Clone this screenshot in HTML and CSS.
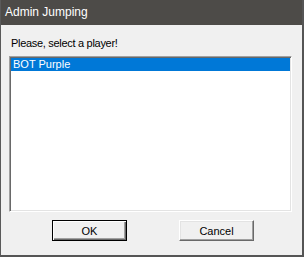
FILE: index.html
```
<!DOCTYPE html>
<html lang="en">
<head>
  <meta charset="UTF-8" />
  <title>Admin Jumping</title>
  <link rel="stylesheet" href="styles.css">
</head>
<body>

<div class="window">
  <div class="titlebar">Admin Jumping</div>
  <div class="client">
    <div class="prompt">Please, select a player!</div>
    <div class="listbox">
      <div class="item selected">BOT Purple</div>
    </div>
    <div class="buttons">
      <button class="btn default">OK</button>
      <button class="btn">Cancel</button>
    </div>
  </div>
</div>

</body>
</html>
```

FILE: styles.css
```
body { margin: 0; padding: 0; background: #4d4b48; }
.window { width: 304px; height: 257px; box-sizing: border-box; display: flex; flex-direction: column;
          background: #4d4b48; border-left: 1px solid #5a5a5a; border-right: 2px solid #555; border-bottom: 2px solid #555; }
.titlebar { height: 25px; flex: none; color: #fff; font: 12px "Liberation Sans", Arial, sans-serif;
            line-height: 25px; padding-left: 4px; }
.client { flex: 1; background: #f0f0f0; padding: 12px 10px 0 8px; display: flex; flex-direction: column;
          font: 11px "Liberation Sans", Arial, sans-serif; color: #000; }
.prompt { line-height: 13px; margin-left: 2px; letter-spacing: -0.3px; }
.listbox { margin-top: 6px; height: 156px; box-sizing: border-box; background: #fff;
           border-style: solid; border-width: 1px; border-color: #a0a0a0 #fff #fff #a0a0a0;
           box-shadow: inset 1px 1px 0 #696969, inset -1px -1px 0 #e3e3e3; padding: 1px; }
.item { height: 13px; line-height: 13px; padding-left: 2px; }
.item.selected { background: #0078d7; color: #fff; }
.buttons { display: flex; gap: 52px; margin-top: 8px; padding-left: 43px; }
.btn { width: 75px; height: 21px; box-sizing: border-box; padding: 0; background: #f0f0f0;
       font: 11px "Liberation Sans", Arial, sans-serif; color: #000;
       border-style: solid; border-width: 1px; border-color: #fff #696969 #696969 #fff;
       box-shadow: inset -1px -1px 0 #a0a0a0, inset 1px 1px 0 #e3e3e3; }
.btn.default { border: 1px solid #000;
               box-shadow: inset 1px 1px 0 #fff, inset -1px -1px 0 #696969, inset -2px -2px 0 #a0a0a0; }
```
